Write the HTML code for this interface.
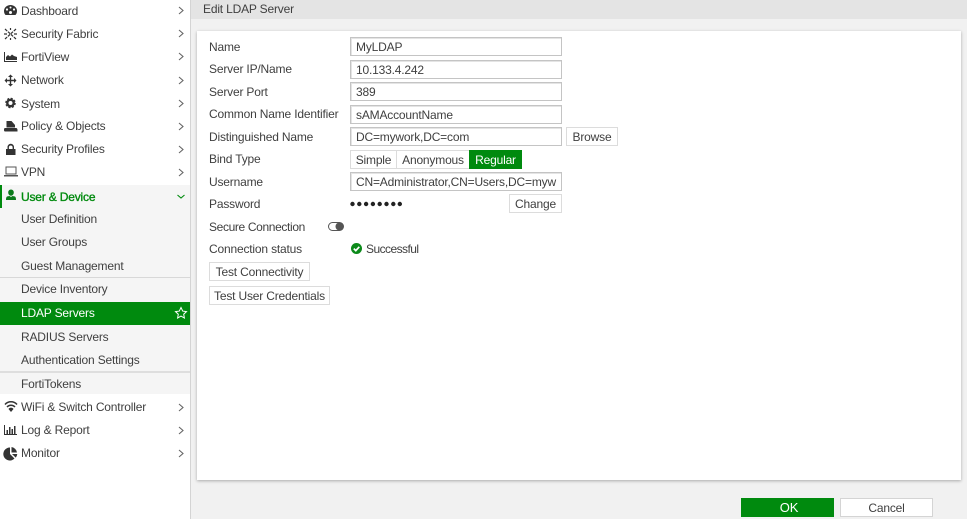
<!DOCTYPE html>
<html><head><meta charset="utf-8"><style>
html,body{margin:0;padding:0}
body{width:967px;height:519px;overflow:hidden;position:relative;background:#f1f1f1;font-family:"Liberation Sans",sans-serif;font-size:12px;letter-spacing:-.18px;color:#3f3f3f}
.a,.t,.i,.b,.r{position:absolute;box-sizing:border-box;white-space:nowrap}
.t{line-height:16px;height:16px}
.r{left:0;width:190px;height:23px;line-height:23px;padding-left:21px}
.i{left:350px;width:212px;height:19px;border:1px solid #c4c4c4;box-shadow:inset 1px 1px 0 #e4e4e4;line-height:19px;padding-left:5px;background:#fff;overflow:hidden}
.b{height:19px;border:1px solid #dcdcdc;background:#fff;line-height:18px;text-align:center}
svg{position:absolute;overflow:visible}
.c{fill:none;stroke:#666;stroke-width:1.1}
</style></head><body>
<div class="a" style="left:0;top:0;width:190px;height:519px;background:#fff"></div>
<div class="a" style="left:190px;top:0;width:1px;height:519px;background:#d4d4d4"></div>
<div class="a" style="left:191px;top:0;width:776px;height:19px;background:#e4e4e4"></div>
<div class="t" style="left:203px;top:1px">Edit LDAP Server</div>
<div class="a" style="left:197px;top:31px;width:764px;height:449px;background:#fff;box-shadow:0 1px 3px rgba(0,0,0,.3)"></div>

<div class="a" style="left:0;top:185px;width:190px;height:209px;background:#f5f5f5"></div>
<div class="a" style="left:0;top:185px;width:2px;height:23px;background:#008a0e"></div>
<div class="a" style="left:0;top:277px;width:190px;height:1px;background:#d8d8d8"></div>
<div class="a" style="left:0;top:371px;width:190px;height:2px;background:#dedede"></div>
<div class="a" style="left:0;top:302px;width:190px;height:23px;background:#008a0e"></div>

<div class="r" style="top:0">Dashboard</div>
<div class="r" style="top:23px">Security Fabric</div>
<div class="r" style="top:46px">FortiView</div>
<div class="r" style="top:69px">Network</div>
<div class="r" style="top:93px">System</div>
<div class="r" style="top:115px">Policy &amp; Objects</div>
<div class="r" style="top:138px">Security Profiles</div>
<div class="r" style="top:161px">VPN</div>
<div class="r" style="top:186px;color:#008a0e;-webkit-text-stroke:.35px #008a0e">User &amp; Device</div>
<div class="r" style="top:208px">User Definition</div>
<div class="r" style="top:231px">User Groups</div>
<div class="r" style="top:255px">Guest Management</div>
<div class="r" style="top:278px">Device Inventory</div>
<div class="r" style="top:302px;color:#fff">LDAP Servers</div>
<div class="r" style="top:326px">RADIUS Servers</div>
<div class="r" style="top:349px">Authentication Settings</div>
<div class="r" style="top:373px">FortiTokens</div>
<div class="r" style="top:396px">WiFi &amp; Switch Controller</div>
<div class="r" style="top:419px">Log &amp; Report</div>
<div class="r" style="top:442px">Monitor</div>

<svg width="190" height="519" style="left:0;top:0">
<g class="c">
<path d="M179 7l4 3.500-4 3.500M179 30l4 3.500-4 3.500M179 53l4 3.500-4 3.500M179 77l4 3.500-4 3.500M179 100l4 3.500-4 3.500M179 123l4 3.500-4 3.500M179 146l4 3.500-4 3.500M179 169l4 3.500-4 3.500M179 404l4 3.500-4 3.500M179 427l4 3.500-4 3.500M179 450l4 3.500-4 3.500"/>
<path d="M177.500 195l3.500 3 3.500-3" style="stroke:#008a0e"/>
</g>
<path d="M181 307.500l1.700 3.600 3.800.5-2.800 2.600.7 3.800-3.400-1.900-3.400 1.900.7-3.800-2.800-2.600 3.800-.5z" fill="none" stroke="#fff" stroke-width="1"/>
<g fill="#333">
<!-- dashboard -->
<path d="M10.500 5a6.500 6 0 0 0-6.500 6c0 1.500.5 3 1.500 4h10c1-1 1.500-2.500 1.500-4a6.500 6 0 0 0-6.500-6z"/>
<circle cx="7" cy="9.500" r="1.100" fill="#fff"/><circle cx="14" cy="9.500" r="1.100" fill="#fff"/><circle cx="10.500" cy="7.500" r="1" fill="#fff"/><circle cx="10.500" cy="12.500" r="1.500" fill="#fff"/>
<!-- fabric -->
<path d="M5 29l11 10M16 29l-11 10M10.500 28v2M10.500 38v2M4 34h3M14 34h3" stroke="#333" stroke-width="1.200" stroke-dasharray="3 1" fill="none"/>
<!-- fortiview -->
<path d="M5 52v9h12v1H4V52zM6 60v-3l2-2 2 1.500 2-2 2 1.500 3 1v3z"/>
<!-- network -->
<path d="M10.500 74.500l2.500 2.500h-1.800v2.800h2.800V78l2.500 2.500-2.500 2.500v-1.800h-2.800V84h1.800l-2.500 2.500L8 84h1.800v-2.800H7V83l-2.500-2.500L7 78v1.800h2.800V77H8z"/>
<!-- system -->
<circle cx="10.500" cy="103" r="3.200" fill="none" stroke="#333" stroke-width="2.400"/>
<circle cx="10.500" cy="103" r="4.700" fill="none" stroke="#333" stroke-width="1.200" stroke-dasharray="2.100 1.600"/>
<!-- policy -->
<path d="M6.500 121h5l3.500 4v2.500H6.500zM5 128h11c1 0 1.500 1 1.500 2v1.500H5c-.7 0-1-.5-1-1.700S4.300 128 5 128z"/>
<!-- lock -->
<path d="M6 149h9.500v6H6zM7.500 149v-2a3.200 3.200 0 0 1 6.500 0v2h-1.400v-2a1.900 1.900 0 0 0-3.700 0v2z"/>
<!-- vpn -->
<path d="M6 167h10v7H6z" fill="none" stroke="#555" stroke-width="1"/><path d="M4 175h14v1.500H4z" fill="#555"/>
<!-- user -->
<path d="M11 189.500a2.800 2.800 0 0 1 2.800 3c0 1.500-1 3.200-2.800 3.200s-2.800-1.700-2.800-3.200a2.800 2.800 0 0 1 2.800-3zM7 196.500l2.500-.5 1.500 1 1.500-1 2.500.5c.7.500 1 1.500 1 3.500H6c0-2 .3-3 1-3.500z" fill="#0a7a1a"/>
<!-- wifi -->
<path d="M5 404.500a8 8 0 0 1 12 0" fill="none" stroke="#333" stroke-width="1.500"/><path d="M7 407a5.500 5.500 0 0 1 8 0" fill="none" stroke="#333" stroke-width="1.500"/><path d="M8.500 409a3 3 0 0 1 5 0L11 412z"/>
<!-- log -->
<path d="M4 425h1v9h12v1H4zM6.500 430h1.500v4H6.500zM9 427h1.500v7H9zM11.500 429h1.500v5h-1.500zM14 426h1.500v8H14z"/>
<!-- monitor -->
<path d="M10 447.500v6.500l4.500 4.500a6.500 6.500 0 1 1-4.500-11zM11.500 447a6.500 6.500 0 0 1 5.500 5.500h-5.500zM12 454h5.300a6.500 6.500 0 0 1-1.600 3.600z"/>
</g>
</svg>

<div class="t" style="left:209px;top:39px">Name</div>
<div class="t" style="left:209px;top:61px">Server IP/Name</div>
<div class="t" style="left:209px;top:84px">Server Port</div>
<div class="t" style="left:209px;top:106px">Common Name Identifier</div>
<div class="t" style="left:209px;top:129px">Distinguished Name</div>
<div class="t" style="left:209px;top:151px">Bind Type</div>
<div class="t" style="left:209px;top:174px">Username</div>
<div class="t" style="left:209px;top:196px">Password</div>
<div class="t" style="left:209px;top:219px;letter-spacing:-.36px">Secure Connection</div>
<div class="t" style="left:209px;top:241px">Connection status</div>

<div class="i" style="top:37px">MyLDAP</div>
<div class="i" style="top:60px">10.133.4.242</div>
<div class="i" style="top:82px">389</div>
<div class="i" style="top:105px">sAMAccountName</div>
<div class="i" style="top:127px">DC=mywork,DC=com</div>
<div class="i" style="top:172px">CN=Administrator,CN=Users,DC=myw</div>
<div class="b" style="left:566px;top:127px;width:52px">Browse</div>
<div class="b" style="left:350px;top:150px;width:47px">Simple</div>
<div class="b" style="left:396px;top:150px;width:74px">Anonymous</div>
<div class="b" style="left:469px;top:150px;width:53px;background:#008a0e;border-color:#008a0e;color:#fff">Regular</div>
<div class="b" style="left:509px;top:194px;width:53px">Change</div>
<div class="b" style="left:209px;top:262px;width:101px">Test Connectivity</div>
<div class="b" style="left:209px;top:286px;width:121px">Test User Credentials</div>

<svg width="60" height="10" style="left:350px;top:199px" fill="#222"><circle cx="2.500" cy="5" r="2.200"/><circle cx="9.300" cy="5" r="2.200"/><circle cx="16.100" cy="5" r="2.200"/><circle cx="22.900" cy="5" r="2.200"/><circle cx="29.700" cy="5" r="2.200"/><circle cx="36.500" cy="5" r="2.200"/><circle cx="43.300" cy="5" r="2.200"/><circle cx="49.800" cy="5" r="2.200"/></svg>
<svg width="18" height="10" style="left:328px;top:222px"><rect x=".5" y=".5" width="15" height="8" rx="4" fill="#fff" stroke="#555"/><circle cx="11.500" cy="4.500" r="4" fill="#555"/></svg>
<svg width="12" height="12" style="left:351px;top:243px"><circle cx="5.500" cy="5.500" r="5.500" fill="#0c8a1a"/><path d="M2.800 5.600l2 2 3.500-3.800" fill="none" stroke="#fff" stroke-width="1.700"/></svg>
<div class="t" style="left:366px;top:241px;letter-spacing:-.55px">Successful</div>

<div class="b" style="left:741px;top:498px;width:93px;height:19px;padding-left:3px;background:#008a0e;border-color:#008a0e;color:#fff;font-size:13px">OK</div>
<div class="b" style="left:840px;top:498px;width:93px;height:19px;border-color:#d4d4d4">Cancel</div>
</body></html>
